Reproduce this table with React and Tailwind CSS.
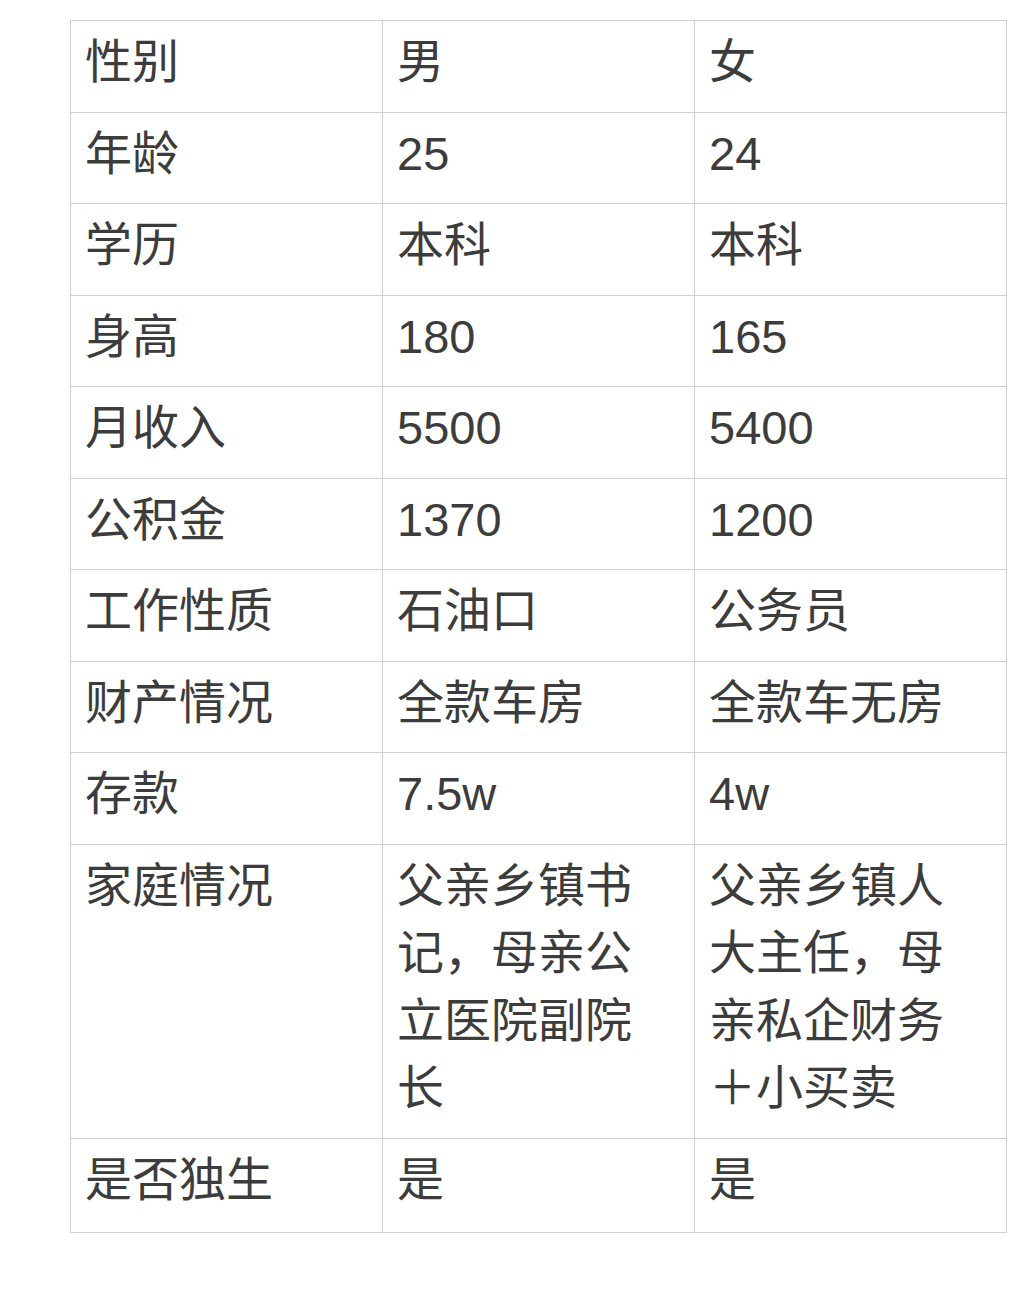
import React from 'react';

const rows = [
  ['性别', ['男'], ['女']],
  ['年龄', ['25'], ['24']],
  ['学历', ['本科'], ['本科']],
  ['身高', ['180'], ['165']],
  ['月收入', ['5500'], ['5400']],
  ['公积金', ['1370'], ['1200']],
  ['工作性质', ['石油口'], ['公务员']],
  ['财产情况', ['全款车房'], ['全款车无房']],
  ['存款', ['7.5w'], ['4w']],
  ['家庭情况', ['父亲乡镇书', '记，母亲公', '立医院副院', '长'], ['父亲乡镇人', '大主任，母', '亲私企财务', '＋小买卖']],
  ['是否独生', ['是'], ['是']],
];

const Cell = ({ lines, last }) => (
  <td
    className={
      last
        ? 'border border-[#cfcfcf] align-top pl-[14px] pr-2 pt-[7px] pb-[19px] w-[312px]'
        : 'border border-[#cfcfcf] align-top pl-[14px] pr-2 pt-[7px] pb-[16px] w-[312px]'
    }
  >
    {lines.map((l, i) => (
      <div key={i} className="whitespace-nowrap leading-[67.5px]">{l}</div>
    ))}
  </td>
);

export default function App() {
  return (
    <div
      className="bg-white min-h-[1315px] pt-[20px] pl-[70px] text-[#3c3c3c] text-[47px]"
      style={{ fontFamily: '"Liberation Sans", "Noto Sans CJK SC", sans-serif' }}
    >
      <table className="border-collapse table-fixed w-[937px]">
        <tbody>
          {rows.map(([label, a, b], idx) => {
            const last = idx === rows.length - 1;
            return (
              <tr key={label}>
                <Cell lines={[label]} last={last} />
                <Cell lines={a} last={last} />
                <Cell lines={b} last={last} />
              </tr>
            );
          })}
        </tbody>
      </table>
    </div>
  );
}
